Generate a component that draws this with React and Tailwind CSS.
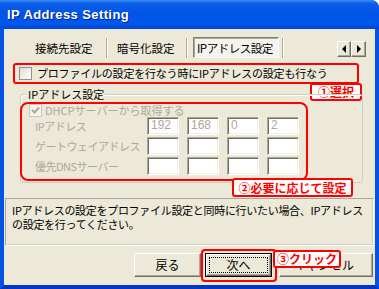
import React from "react";

const jp = "font-['Noto_Sans_CJK_JP',sans-serif]";

function Field({ v }) {
  return (
    <div className="w-[32px] h-[18px] bg-white border border-t-[#aca899] border-l-[#aca899] border-b-white border-r-white shadow-[inset_1px_1px_0_#716f64,inset_-1px_-1px_0_#f1efe2] text-[#aca899] text-[12px] leading-[15px] pl-[3px] font-['Liberation_Sans',sans-serif]">
      {v}
    </div>
  );
}

function Row({ label, values }) {
  return (
    <div className="flex items-center h-[18px]">
      <div className="w-[126px] pl-[14px] text-[11px] leading-[14px] tracking-[-0.5px] text-[#aca899] whitespace-nowrap">{label}</div>
      <div className="flex gap-[8px]">
        {values.map((v, i) => (
          <Field key={i} v={v} />
        ))}
      </div>
    </div>
  );
}

function Tri({ dir }) {
  return (
    <svg width="6" height="8" viewBox="0 0 6 8">
      {dir === "l" ? <path d="M5 0 L1 4 L5 8 Z" fill="#000" /> : <path d="M1 0 L5 4 L1 8 Z" fill="#000" />}
    </svg>
  );
}

function Note({ children, className }) {
  return (
    <div className={"absolute bg-white border-2 border-[#ff0000] rounded-[3px] text-[#ff0000] font-bold text-[12px] leading-[14px] flex items-center justify-center whitespace-nowrap " + className}>
      {children}
    </div>
  );
}

const raised =
  "bg-[#ece9d8] border border-t-white border-l-white border-b-[#716f64] border-r-[#716f64] shadow-[inset_-1px_-1px_0_#aca899] flex items-center text-[12px] text-black";

export default function App() {
  return (
    <div className={"w-[379px] h-[289px] flex flex-col overflow-hidden rounded-tr-[8px] bg-[#0453e4] " + jp}>
      <div className="h-[29px] shrink-0 flex items-center pl-[7px] bg-[linear-gradient(180deg,#3b8cf7_0%,#0a5ee8_12%,#0055e5_45%,#0058ee_80%,#0046d2_100%)]">
        <span className="text-white font-bold text-[13px] tracking-[0.4px] font-['Liberation_Sans',sans-serif] [text-shadow:1px_1px_0_#0a1e80]">
          IP Address Setting
        </span>
      </div>

      <div className="flex-1 flex flex-col bg-[#ece9d8] border-l-[4px] border-r-[4px] border-b-[4px] border-l-[#0453e4] border-r-[#0453e4] border-b-[#0336c4] text-black">
        <div className="flex items-center h-[21px] mt-[8px] text-[11.5px] leading-[14px]">
          <div className="w-[102px] pl-[31px]">接続先設定</div>
          <div className="w-[2px] h-[20px] border-l border-[#aca899] bg-white"></div>
          <div className="w-[78px] pl-[9px]">暗号化設定</div>
          <div className="w-[2px] h-[20px] border-l border-[#aca899] bg-white"></div>
          <div className="ml-[5px] w-[86px] h-[21px] flex items-center pl-[3px] tracking-[-0.5px] whitespace-nowrap bg-[#f4f3ee] border border-t-[#808080] border-l-[#808080] border-b-white border-r-white shadow-[inset_1px_1px_0_#aca899]">
            IPアドレス設定
          </div>
          <div className="ml-[3px] w-[2px] h-[20px] border-l border-[#aca899] bg-white"></div>
          <div className="ml-auto mr-[9px] flex mt-[3px]">
            <div className={raised + " justify-center w-[14px] h-[16px]"}>
              <Tri dir="l" />
            </div>
            <div className={raised + " justify-center w-[15px] h-[16px]"}>
              <Tri dir="r" />
            </div>
          </div>
        </div>

        <div className="relative flex items-center h-[20px] mt-[5px] pl-[15px] gap-[5px]">
          <div className="w-[13px] h-[13px] border border-[#8e8f8f] bg-[linear-gradient(135deg,#dcdcd7,#ffffff)]"></div>
          <span className="text-[11px] leading-[14px] tracking-[-0.2px] whitespace-nowrap">プロファイルの設定を行なう時にIPアドレスの設定も行なう</span>
          <div className="absolute left-[9px] top-0 w-[346px] h-[21px] border-2 border-[#ff0000] rounded-[3px]"></div>
          <Note className="left-[306px] top-[20px] w-[52px] h-[18px]">①選択</Note>
        </div>

        <div className="relative ml-[16px] mt-[11px] w-[343px] h-[89px] border border-[#d0d0bf] rounded-[3px] shadow-[inset_1px_1px_0_#ffffff] pt-[8px]">
          <div className="absolute left-[6px] top-[-8px] px-[1px] bg-[#ece9d8] text-[11px] leading-[14px]">IPアドレス設定</div>
          <div className="flex items-center h-[14px] pl-[8px] gap-[3px]">
            <div className="w-[13px] h-[13px] border border-[#c9c7ba] bg-[#f4f3ee] flex items-center justify-center">
              <svg width="9" height="9" viewBox="0 0 9 9">
                <path d="M1 4 L3.5 6.5 L8 1.5" stroke="#aca899" strokeWidth="2" fill="none" />
              </svg>
            </div>
            <span className="text-[11px] leading-[14px] text-[#aca899] whitespace-nowrap">DHCPサーバーから取得する</span>
          </div>
          <div className="flex flex-col gap-[2px]">
            <Row label="IPアドレス" values={["192", "168", "0", "2"]} />
            <Row label="ゲートウェイアドレス" values={["", "", "", ""]} />
            <Row label="優先DNSサーバー" values={["", "", "", ""]} />
          </div>
          <div className="absolute left-[-1px] top-[7px] w-[288px] h-[79px] border-2 border-[#ff0000] rounded-[8px]"></div>
          <Note className="left-[211px] top-[83px] w-[121px] h-[19px]">②必要に応じて設定</Note>
        </div>

        <div className="mx-[1px] mt-[15px] h-[48px] border border-t-[#aca899] border-l-[#aca899] border-b-white border-r-white shadow-[inset_-1px_-1px_0_#d0d0bf] pl-[6px] pt-[4px] text-[11px] leading-[14px] tracking-[-0.3px]">
          IPアドレスの設定をプロファイル設定と同時に行いたい場合、IPアドレスの設定を行ってください。
        </div>

        <div className="relative flex mt-[7px] h-[24px]">
          <div className={raised + " justify-center ml-[130px] w-[67px] h-[24px]"}>戻る</div>
          <div className="ml-[4px] w-[67px] h-[24px] border border-black">
            <div className={raised + " w-full h-full p-[2px]"}>
              <div className="w-full h-full border border-dotted border-black flex items-center justify-center">次へ</div>
            </div>
          </div>
          <div className={raised + " justify-end pr-[18px] ml-[7px] w-[94px] h-[24px]"}>キャンセル</div>
          <div className="absolute left-[197px] top-[-4px] w-[76px] h-[33px] border-2 border-[#ff0000] rounded-[4px]"></div>
          <Note className="left-[269px] top-[-3px] w-[68px] h-[18px]">③クリック</Note>
        </div>
      </div>
    </div>
  );
}
